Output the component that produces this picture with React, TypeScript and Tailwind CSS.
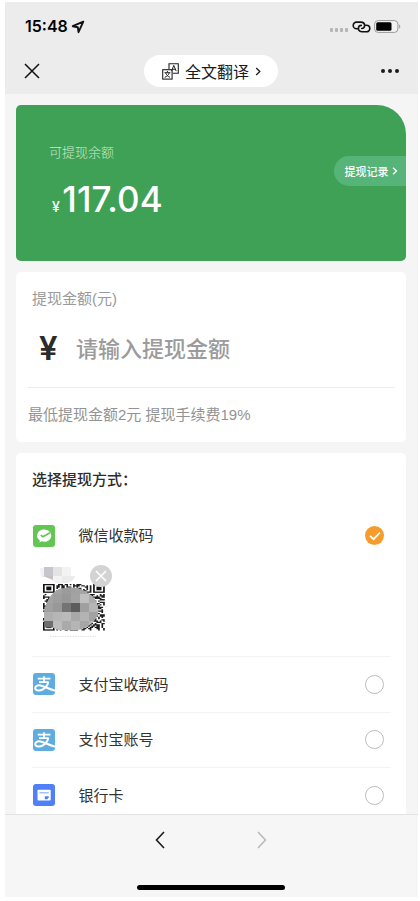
import { useState } from 'react';
import type { ReactNode } from 'react';
import { clsx } from 'clsx';

interface Methode {
  id: string;
  label: string;
  icon: ReactNode;
}

function WechatIcon() {
  return (
    <svg viewBox="0 0 22 22" className="size-[22px] shrink-0">
      <rect width="22" height="22" rx="3" fill="#62c554" />
      <path d="M11.2 4.6c-4 0-7.1 2.7-7.1 6.1 0 2 1.1 3.7 2.8 4.8l-.5 2 2.3-1.2c.8.2 1.6.4 2.5.4 4 0 7.1-2.7 7.1-6s-3.1-6.1-7.1-6.1Z" fill="#fff" />
      <path d="M7.7 10.1l2.1 1.6 7.3-4" fill="none" stroke="#62c554" strokeWidth="1.6" />
    </svg>
  );
}

function AlipayIcon() {
  return (
    <svg viewBox="0 0 22 22" className="size-[22px] shrink-0">
      <rect width="22" height="22" rx="3" fill="#5fade0" />
      <g fill="none" stroke="#fff" strokeWidth="1.7">
        <path d="M4.8 5.7h12.6M11 3.2v6M6 9.2h9.8" />
        <path d="M15.4 9.2c-1 3.2-3 5.8-5.8 7.3-2.6 1.4-6.8 1.5-7.3-1-.4-2.4 2.3-3.7 5.3-3 3.9.9 7.9 3.4 14.4 5.1" strokeWidth="2" />
      </g>
    </svg>
  );
}

function CardIcon() {
  return (
    <svg viewBox="0 0 22 22" className="size-[22px] shrink-0">
      <rect width="22" height="22" rx="3" fill="#4f80f7" />
      <rect x="4.5" y="5.7" width="13.2" height="10.8" rx=".8" fill="#fff" />
      <path d="M6.5 8.8h9.2" stroke="#8fb0fa" strokeWidth="1.2" />
      <path d="M11.8 12.2h3.9v1.3l-1.5 1.7h-2.4z" fill="#4f80f7" />
    </svg>
  );
}

const METHODES: Methode[] = [
  { id: 'wechat', label: '微信收款码', icon: <WechatIcon /> },
  { id: 'alipay-qr', label: '支付宝收款码', icon: <AlipayIcon /> },
  { id: 'alipay', label: '支付宝账号', icon: <AlipayIcon /> },
  { id: 'bank', label: '银行卡', icon: <CardIcon /> },
];

const QR_SIZE = 37;

const isFinder = (x: number, y: number) =>
  (x < 8 && y < 8) || (x > QR_SIZE - 9 && y < 8) || (x < 8 && y > QR_SIZE - 9);

const modules: string[] = [];
for (let y = 0; y < QR_SIZE; y++) {
  for (let x = 0; x < QR_SIZE; x++) {
    const n = Math.sin(x * 12.9898 + y * 78.233) * 43758.5453;
    if (!isFinder(x, y) && n - Math.floor(n) > 0.52) modules.push(`M${x} ${y}h1v1h-1z`);
  }
}

const MOSAIC = [
  ['#a3a3a3', '#a3a3a3', '#9b9b9b', '#a1a1a1', '#a5a5a5', '#a8a8a8'],
  ['#a3a3a3', '#9e9e9e', '#989898', '#a3a3a3', '#c0c0c0', '#acacac'],
  ['#a0a0a0', '#989898', '#747474', '#5c5c5c', '#a0a0a0', '#b5b5b5'],
  ['#b0b0b0', '#b6b6b6', '#bababa', '#a8a8a8', '#b3b3b3', '#a2a2a2'],
  ['#6e6e6e', '#bdbdbd', '#aaaaaa', '#b5b5b5', '#a6a6a6', '#b8b8b8'],
];

function QrThumb() {
  return (
    <svg viewBox="0 0 72 78" className="h-[78px] w-[72px]">
      <path d="M0 5h4v9H1z" fill="#f1f1f6" />
      <rect x="4" y="4" width="9" height="9" fill="#c7c6cd" />
      <rect x="13" y="4" width="9" height="9" fill="#e4e4e4" />
      <rect x="22" y="4" width="9" height="9" fill="#f3f3f3" />
      <path d="M3 13h10v4z" fill="#c9bfc1" />
      <path d="M13 13h9v8c-4 0-7-1-9-3z" fill="#f3f3f3" />
      <path d="M22 13h13c-1 4-4 6-8 7h-5z" fill="#ebebeb" />
      <g transform="translate(3 21) scale(1.67 1.26)">
        <path d={modules.join('')} fill="#1c1c1c" />
        {[[0, 0], [30, 0], [0, 30]].map(([x, y]) => (
          <g key={`${x}-${y}`}>
            <rect x={x + 0.5} y={y + 0.5} width="6" height="6" fill="#fff" stroke="#111" />
            <rect x={x + 2} y={y + 2} width="3" height="3" fill="#111" />
          </g>
        ))}
      </g>
      <clipPath id="mosaic">
        <path d="M17 27C22 24 38 23 45 28C52 32 58 38 58.5 46C59 55 52 61 45 65C38 68 22 69 15 66L13 64.5H5L3.5 55C4 44 8 33 17 27Z" />
      </clipPath>
      <g clipPath="url(#mosaic)">
        {MOSAIC.map((row, y) =>
          row.map((fill, x) => (
            <rect key={`${x}-${y}`} x={4 + x * 9} y={22 + y * 9} width="9.1" height="9.1" fill={fill} />
          ))
        )}
      </g>
      <path d="M10 73.5h46" stroke="#dcdcdc" strokeDasharray="1.5 1" strokeWidth=".8" />
    </svg>
  );
}

function StatusBar() {
  return (
    <div className="flex h-[49px] items-center pr-[16.5px] pl-5">
      <span className="pb-px font-[Inter] text-base leading-none font-semibold text-black">15:48</span>
      <svg viewBox="0 0 14 14" className="ml-[3px] size-3.5" fill="none" stroke="#111" strokeWidth="1.9" strokeLinejoin="round">
        <path d="M12.3 1.7L1.7 6.2l5.1 1 .7 5z" />
      </svg>
      <div className="mt-[7px] ml-auto flex gap-[1.5px]">
        {[0, 1, 2, 3].map((i) => (
          <span key={i} className="size-[3.5px] rounded-[1px] bg-[#b5b5b5]" />
        ))}
      </div>
      <svg viewBox="0 0 19 12" className="ml-[3.5px] h-3 w-[19px]" fill="none" stroke="#111" strokeWidth="1.6" strokeLinecap="round">
        <path d="M5.600 7.700H4.500a3.300 3.300 0 0 1 0-6.600h4.200c2.400 0 3.900 1.400 3.900 3.400 0 1.800-1.200 3-2.900 3" />
        <path d="M13.400 4.200h1.100a3.300 3.300 0 0 1 0 6.600h-4.200c-2.400 0-3.900-1.400-3.900-3.400 0-1.800 1.200-3 2.900-3" />
      </svg>
      <svg viewBox="0 0 28 13" className="ml-[3px] h-[13px] w-7">
        <rect x=".6" y=".6" width="23.3" height="11.8" rx="3.5" fill="#f3f3f3" stroke="#999" strokeWidth="1" />
        <rect x="2.2" y="2.2" width="15.3" height="8.6" rx="1.5" fill="#000" />
        <path d="M25.2 4.5c1.4.4 1.4 3.6 0 4z" fill="#999" />
      </svg>
    </div>
  );
}

function NavBar() {
  return (
    <div className="flex h-[43px] items-center justify-between pr-[19px] pb-[3px] pl-[19px]">
      <svg viewBox="0 0 16 16" className="size-4" fill="none" stroke="#111" strokeWidth="1.5">
        <path d="M1 1l14 14M15 1L1 15" />
      </svg>
      <button className="mr-[-1px] flex h-8 w-[134px] items-center rounded-full bg-white pl-[18px] text-base text-[#1b1b1b]">
        <svg viewBox="0 0 17 17" className="mr-1.5 size-[17px]" fill="none" stroke="#222" strokeWidth="1.1">
          <path d="M7 6V.7h9.3v9.6h-5.5" />
          <rect x=".7" y="6.7" width="9.4" height="9.4" />
          <path d="M9.5 8.1l2.3-5.7 2.4 5.7M10.3 6.3h3" strokeWidth="1" />
          <path d="M5.4 8v1.5M2.5 9.7h5.9M3.7 9.9c.6 2 2 3.500 4.300 4.400M7.200 9.900c-.6 2-2 3.500-4.500 4.400" strokeWidth="1" />
        </svg>
        全文翻译
        <svg viewBox="0 0 6 10" className="ml-1.5 h-[9px] w-[6px]" fill="none" stroke="#222" strokeWidth="1.5">
          <path d="M1 1l4 4-4 4" />
        </svg>
      </button>
      <div className="flex gap-[3px]">
        {[0, 1, 2].map((i) => (
          <span key={i} className="size-1 rounded-full bg-[#1a1a1a]" />
        ))}
      </div>
    </div>
  );
}

export default function App() {
  const [selected, setSelected] = useState('wechat');

  return (
    <div className="h-[901px] w-[420px] overflow-hidden bg-white pt-0.5 pl-[5px] font-['Noto_Sans_CJK_SC',sans-serif]">
      <div className="flex h-[895px] w-[413px] flex-col bg-[#f5f5f5]">
        <header className="h-[92px] shrink-0 bg-[#ececec]">
          <StatusBar />
          <NavBar />
        </header>

        <main className="flex h-[720px] shrink-0 flex-col gap-[11px] overflow-hidden pt-[11px] pr-3 pl-[11px]">
          {/* 余额 */}
          <section className="flex h-[156px] shrink-0 justify-between rounded-[5px] rounded-tr-[29px] bg-[#3fa156]">
            <div className="pt-[37px] pl-[33px]">
              <p className="text-[13px] leading-5 font-light text-[#c4eacd]">可提现余额</p>
              <p className="mt-[15px] flex items-baseline pl-[3px] font-[Inter] leading-[44px] text-white">
                <span className="text-sm font-medium">¥</span>
                <span className="ml-[2.5px] text-[35px] font-medium tracking-[0.1px]">117.04</span>
              </p>
            </div>
            <button className="mt-[51px] flex h-[30px] w-[72.5px] items-center rounded-l-full bg-[#56b478] pl-[11px] text-[11px] font-medium text-white">
              提现记录
              <svg viewBox="0 0 6 8" className="ml-[3px] h-2 w-1.5" fill="none" stroke="#fff" strokeWidth="1.3">
                <path d="M1 .8L4.5 4 1 7.2" />
              </svg>
            </button>
          </section>

          {/* 提现金额 */}
          <section className="h-[170px] shrink-0 rounded-[5px] bg-white px-3 font-['Liberation_Sans','Noto_Sans_CJK_SC',sans-serif]">
            <p className="pt-4 pl-1 text-[15px] leading-[22px] text-[#9a9a9a]">提现金额(元)</p>
            <div className="flex h-[78px] items-center border-b border-[#ececec] pl-[11px]">
              <span className="w-[37px] font-[Inter] text-[33px] font-semibold text-[#2b2b2b]">¥</span>
              <span className="pt-px text-[22px] font-medium text-[#9b9b9b]">请输入提现金额</span>
            </div>
            <p className="pt-4 text-[15px] leading-[22px] text-[#939393]">最低提现金额2元 提现手续费19%</p>
          </section>

          {/* 提现方式 */}
          <section className="shrink-0 rounded-t-[5px] bg-white pr-[15px] pl-4">
            <h2 className="pt-[15px] pb-[18.5px] text-[15px] leading-[22px] font-medium text-[#2c2c2c]">选择提现方式：</h2>
            {METHODES.map((m) => (
              <div key={m.id} className="border-b border-[#f3f3f3]">
                <div className="flex h-[54.5px] items-center pr-[7px] pl-px" onClick={() => setSelected(m.id)}>
                  {m.icon}
                  <span className="ml-[23.5px] pb-px text-[15px] text-[#333]">{m.label}</span>
                  <span
                    className={clsx(
                      'ml-auto flex size-[19px] items-center justify-center rounded-full',
                      selected === m.id ? 'bg-[#f59c2c]' : 'border border-[#bcbcbc]'
                    )}
                  >
                    {selected === m.id && (
                      <svg viewBox="0 0 12 10" className="h-2.5 w-3" fill="none" stroke="#fff" strokeWidth="1.8">
                        <path d="M1 4.8l3.6 3.4L11 1.5" />
                      </svg>
                    )}
                  </span>
                </div>
                {m.id === 'wechat' && (
                  <div className="relative h-[93px] pl-2">
                    <QrThumb />
                    <button className="absolute top-[1.5px] left-[58px] flex size-[22px] items-center justify-center rounded-full bg-[#d3d3d3]">
                      <svg viewBox="0 0 12 12" className="size-3" fill="none" stroke="#fff" strokeWidth="1.6">
                        <path d="M1 1l10 10M11 1L1 11" />
                      </svg>
                    </button>
                  </div>
                )}
              </div>
            ))}
          </section>
        </main>

        <footer className="flex grow flex-col items-center border-t border-[#e3e3e3] bg-[#f6f6f6] pr-px">
          <div className="mt-4 flex gap-[92px]">
            <svg viewBox="0 0 10 18" className="h-[18px] w-2.5" fill="none" stroke="#1c1c1c" strokeWidth="1.6">
              <path d="M9 1L1.5 9 9 17" />
            </svg>
            <svg viewBox="0 0 10 18" className="h-[18px] w-2.5" fill="none" stroke="#b5b5b5" strokeWidth="1.4">
              <path d="M1 1l7.5 8L1 17" />
            </svg>
          </div>
          <div className="mt-9 h-[5px] w-[148px] rounded-full bg-black" />
        </footer>
      </div>
    </div>
  );
}
